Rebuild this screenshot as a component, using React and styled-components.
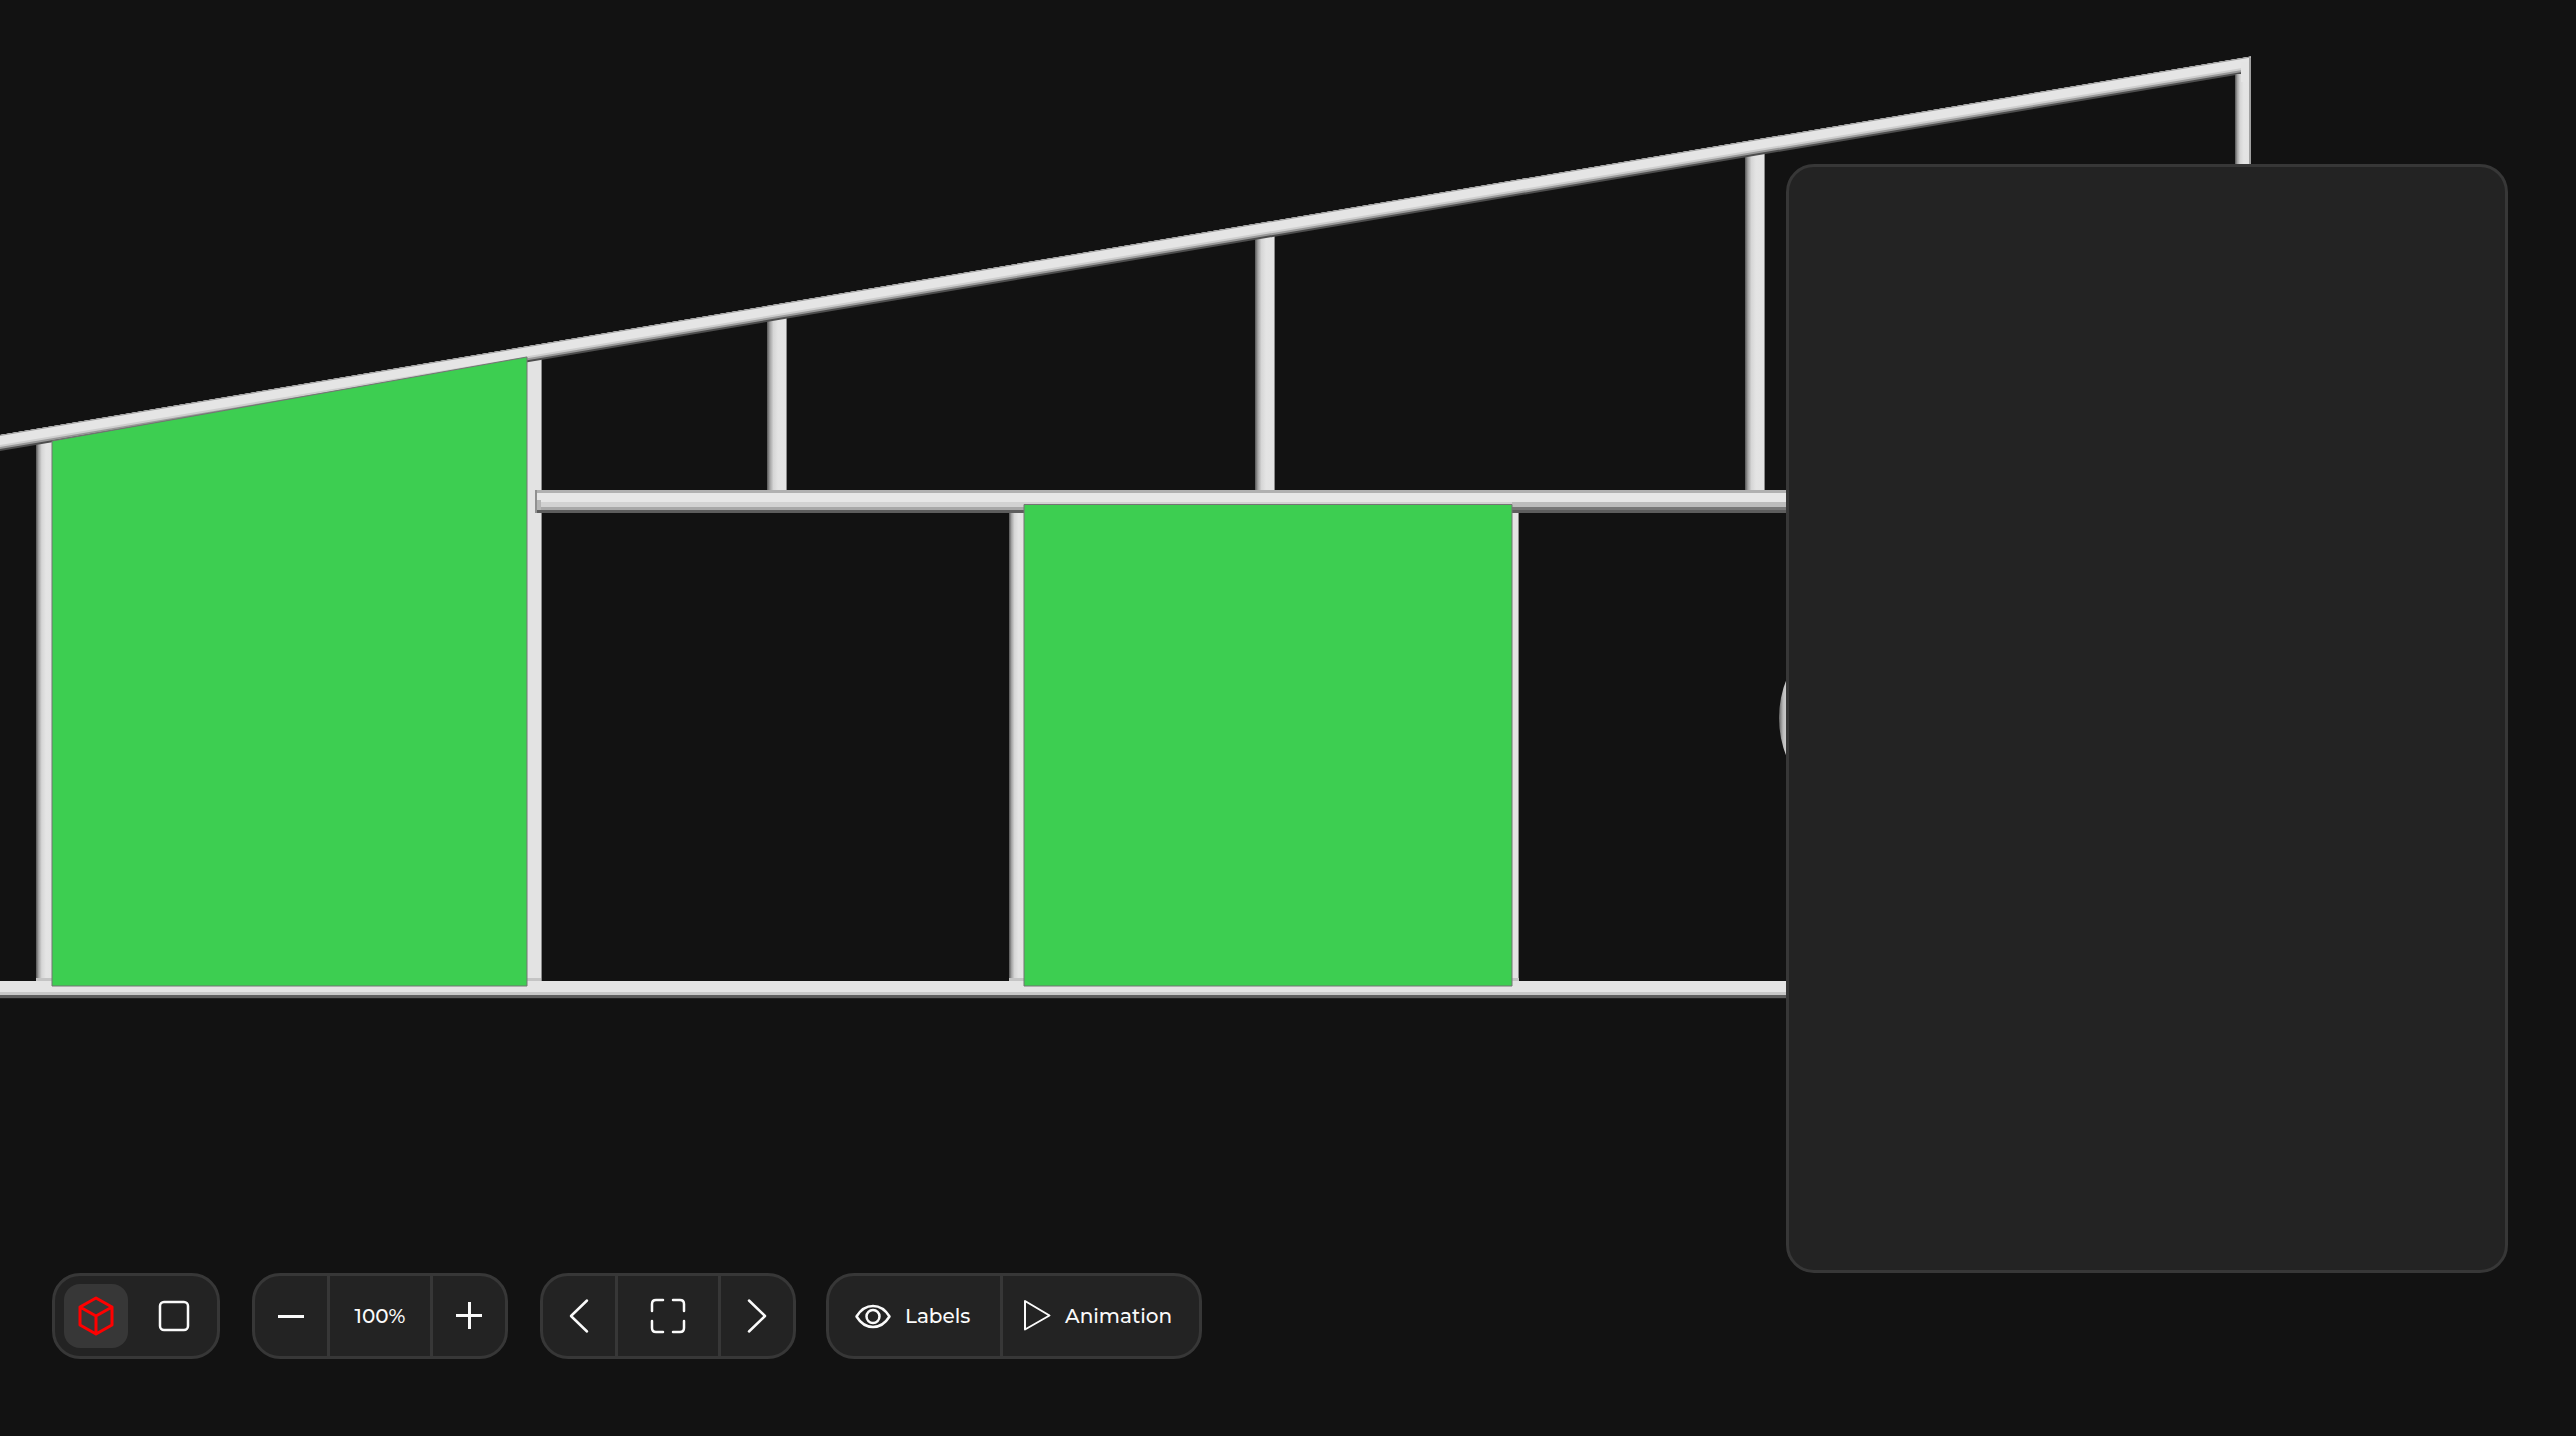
import React, { useState } from "react";
import styled, { createGlobalStyle } from "styled-components";

const GlobalStyle = createGlobalStyle`
  *, *::before, *::after { box-sizing: border-box; }
  body {
    margin: 0;
    background: #121212;
    color: #fafafa;
    font-family: Montserrat, Inter, "Liberation Sans", sans-serif;
  }
`;

const Viewer = styled.main`
  position: relative;
  display: flex;
  flex-direction: column;
  min-height: 100vh;
  padding: 164px 68px 77px 52px;
  overflow: hidden;
`;

const SceneSvg = styled.svg`
  position: absolute;
  inset: 0;
  width: 100%;
  height: 100%;
`;

const SidePanel = styled.aside`
  position: relative;
  flex: 1;
  align-self: flex-end;
  width: 722px;
  max-width: 100%;
  border: 3px solid #373737;
  border-radius: 28px;
  background: #232323;
`;

const Toolbar = styled.div`
  position: relative;
  display: flex;
  flex-wrap: wrap;
  gap: 30px;
`;

const ViewControls = styled.div`
  display: flex;
  flex-wrap: wrap;
  gap: 32px;
`;

const BaseButton = styled.button`
  display: flex;
  align-items: center;
  justify-content: center;
  padding: 0;
  border: 0;
  background: transparent;
  color: inherit;
  font: inherit;
  cursor: pointer;
`;

const Group = styled.div`
  display: flex;
  height: 86px;
  border: 3px solid #373737;
  border-radius: 28px;
  background: #232323;
  overflow: hidden;

  && > * + * {
    border-left: 3px solid #373737;
  }
`;

const ModeGroup = styled.div`
  display: flex;
  align-items: center;
  gap: 14px;
  height: 86px;
  padding: 0 11px 0 9px;
  border: 3px solid #373737;
  border-radius: 28px;
  background: #232323;
`;

const ModeButton = styled(BaseButton)`
  width: 64px;
  height: 64px;
  border-radius: 16px;
  background: ${(p) => (p.$active ? "#373737" : "transparent")};
  color: ${(p) => (p.$active ? "#ff0000" : "#fafafa")};
`;

const ToolButton = styled(BaseButton)`
  width: ${(p) => (p.$wide ? "103px" : "75px")};

  &:first-child {
    width: 72px;
  }
`;

const ZoomValue = styled.output`
  display: flex;
  align-items: center;
  justify-content: center;
  width: 103px;
  font-size: 20px;
  font-weight: 500;
  line-height: 24px;
`;

const TextButton = styled(BaseButton)`
  justify-content: flex-start;
  gap: 14px;
  min-width: ${(p) => p.$width}px;
  padding: 0 ${(p) => p.$inset}px;
  font-size: 20px;
  font-weight: 500;
  line-height: 24px;
`;

const Icon = styled.svg.attrs({ "aria-hidden": true, fill: "none", stroke: "currentColor", strokeLinecap: "round", strokeLinejoin: "round", strokeWidth: 2.5 })`
  flex: none;
  width: ${(p) => p.$w}px;
  height: 40px;
`;

const CubeIcon = () => (
  <Icon $w={36} viewBox="0 0 36 40">
    <path d="M18 2 34 11v18L18 38 2 29V11zM2 11l16 9 16-9M18 20v18" strokeWidth="3" />
  </Icon>
);

const SquareIcon = () => (
  <Icon $w={32} viewBox="0 0 32 40">
    <rect x="2" y="6" width="28" height="28" rx="4" />
  </Icon>
);

const MinusIcon = () => (
  <Icon $w={28} viewBox="0 0 28 40">
    <path d="M1 20.5h26" strokeLinecap="butt" strokeWidth="3" />
  </Icon>
);

const PlusIcon = () => (
  <Icon $w={28} viewBox="0 0 28 40">
    <path d="M1 19.5h26M14.500 6v27" strokeLinecap="butt" strokeWidth="3" />
  </Icon>
);

const PrevIcon = () => (
  <Icon $w={20} viewBox="0 0 20 40">
    <path d="M18 4.500 2 20 18 35.500" />
  </Icon>
);

const NextIcon = () => (
  <Icon $w={20} viewBox="0 0 20 40">
    <path d="m2 4.500 16 15.500L2 35.500" />
  </Icon>
);

const FitIcon = () => (
  <Icon $w={36} viewBox="0 0 36 40">
    <path d="M2 15V8q0-4 4-4h7M23 4h7q4 0 4 4v7M34 25v7q0 4-4 4h-7M13 36H6q-4 0-4-4v-7" />
  </Icon>
);

const EyeIcon = () => (
  <Icon $w={36} viewBox="0 0 36 40">
    <path d="M1.500 20.500Q8 10 18 10T34.500 20.500Q28 31 18 31T1.500 20.500z" />
    <circle cx="18" cy="20.500" r="6.500" />
  </Icon>
);

const PlayIcon = () => (
  <Icon $w={28} viewBox="0 0 28 40">
    <path d="M2 5v28.500L26.500 19.500z" strokeWidth="2" />
  </Icon>
);

const Post = ({ x, y, width, bottom, shade = true }) => (
  <g>
    <rect x={x} y={y} width={width} height={bottom - y} fill={shade ? "url(#post)" : "#e3e3e3"} />
    <rect x={x + width - 1} y={y} width="1" height={bottom - y} fill="#8b8b8b" />
  </g>
);

const Scene = () => (
  <SceneSvg viewBox="0 0 2576 1436" preserveAspectRatio="xMidYMid slice" role="img" aria-label="Frame structure">
    <defs>
      <linearGradient id="post">
        <stop offset="0" stopColor="#555" />
        <stop offset="0.15" stopColor="#a4a4a4" />
        <stop offset="0.32" stopColor="#d6d6d6" />
        <stop offset="0.55" stopColor="#e4e4e4" />
        <stop offset="1" stopColor="#e3e3e3" />
      </linearGradient>
      <linearGradient id="ball">
        <stop offset="0" stopColor="#666" />
        <stop offset="0.02" stopColor="#bbb" />
        <stop offset="0.05" stopColor="#e0e0e0" />
      </linearGradient>
    </defs>

    <Post x={36} y={440} width={18} bottom={981} />
    <Post x={524} y={358} width={18} bottom={981} shade={false} />
    <Post x={767} y={316} width={20} bottom={490} />
    <Post x={1255} y={234} width={20} bottom={490} />
    <Post x={1745} y={152} width={20} bottom={490} />
    <Post x={1009} y={512} width={17} bottom={981} />
    <Post x={1508} y={512} width={11} bottom={981} shade={false} />
    <path d="M36 978h16v3H36zM527 978h14v3h-14zM1009 978h15v3h-15zM1512 978h7v3h-7z" fill="#c4c4c4" />

    <rect x="535" y="490" width="1300" height="23" fill="#5d5d5d" />
    <rect x="535" y="490" width="1300" height="20" fill="#a8a8a8" />
    <rect x="535" y="490" width="1300" height="17" fill="#d2d2d2" />
    <rect x="535" y="490" width="1300" height="12" fill="#e6e6e6" />
    <rect x="535" y="490" width="1300" height="3" fill="#b0b0b0" />
    <path d="M1512 502h323v5h-323z" fill="#bcbcbc" />
    <path d="M1512 507h323v3h-323z" fill="#777" />
    <path d="M535 490h2v23h-2z" fill="#909090" />
    <path d="M537 500h4v10h-4z" fill="#b5b5b5" />

    <rect y="981" width="1900" height="18" fill="#202020" />
    <rect y="981" width="1900" height="17" fill="#5e5e5e" />
    <rect y="981" width="1900" height="14" fill="#c8c8c8" />
    <rect y="981" width="1900" height="11" fill="#e4e4e4" />

    <g transform="matrix(1 -0.1682 0 1 0 435)">
      <rect y="0" width="2251" height="16" fill="#4d4d4d" />
      <rect y="0" width="2251" height="14" fill="#999" />
      <rect y="0" width="2251" height="12" fill="#cecece" />
      <rect y="0" width="2251" height="10" fill="#e5e5e5" />
      <rect y="0" width="2251" height="1" fill="#999" />
    </g>
    <path d="M2235 74h16v120h-16z" fill="url(#post)" />
    <path d="M2241 62h8v20h-8z" fill="#e4e4e4" />
    <path d="M2249 58h2v130h-2z" fill="#a0a0a0" />
    <circle cx="1883" cy="718" r="104" fill="url(#ball)" />

    <path d="M52 441 527 357V986H52z" fill="#3dce51" stroke="#747474" />
    <path d="M1024 504.500h488V986h-488z" fill="#3dce51" stroke="#747474" />
  </SceneSvg>
);

export default function App() {
  const [mode, setMode] = useState("3d");
  const [zoom, setZoom] = useState(100);

  return (
    <>
      <GlobalStyle />
      <Viewer>
        <Scene />
        <SidePanel aria-label="Details" />
        <Toolbar role="toolbar" aria-label="View tools">
          <ViewControls>
            <ModeGroup>
              <ModeButton type="button" $active={mode === "3d"} aria-pressed={mode === "3d"} aria-label="3D view" onClick={() => setMode("3d")}>
                <CubeIcon />
              </ModeButton>
              <ModeButton type="button" $active={mode === "2d"} aria-pressed={mode === "2d"} aria-label="2D view" onClick={() => setMode("2d")}>
                <SquareIcon />
              </ModeButton>
            </ModeGroup>
            <Group>
              <ToolButton type="button" aria-label="Zoom out" onClick={() => setZoom((z) => Math.max(10, z - 10))}>
                <MinusIcon />
              </ToolButton>
              <ZoomValue>{zoom}%</ZoomValue>
              <ToolButton type="button" aria-label="Zoom in" onClick={() => setZoom((z) => z + 10)}>
                <PlusIcon />
              </ToolButton>
            </Group>
            <Group>
              <ToolButton type="button" aria-label="Previous view">
                <PrevIcon />
              </ToolButton>
              <ToolButton type="button" aria-label="Fit to screen" $wide>
                <FitIcon />
              </ToolButton>
              <ToolButton type="button" aria-label="Next view">
                <NextIcon />
              </ToolButton>
            </Group>
          </ViewControls>
          <Group>
            <TextButton type="button" $width={171} $inset={26}>
              <EyeIcon />
              Labels
            </TextButton>
            <TextButton type="button" $width={199} $inset={20}>
              <PlayIcon />
              Animation
            </TextButton>
          </Group>
        </Toolbar>
      </Viewer>
    </>
  );
}
